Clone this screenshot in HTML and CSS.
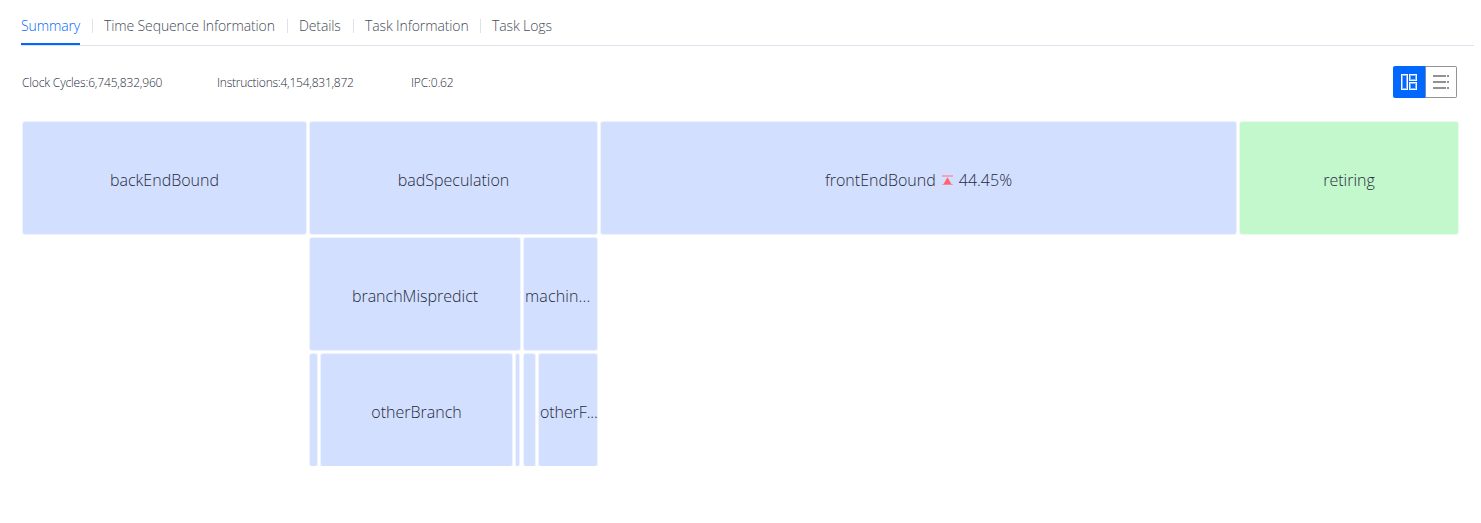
FILE: index.html
```html
<!DOCTYPE html>
<html lang="en">
<head>
<meta charset="utf-8">
<title>Summary</title>
<link rel="stylesheet" href="styles.css">
</head>
<body>
<nav class="tabs">
  <a class="tab summary active">Summary</a>
  <a class="tab sequence">Time Sequence Information</a>
  <a class="tab details">Details</a>
  <a class="tab info">Task Information</a>
  <a class="tab logs">Task Logs</a>
</nav>
<header class="stats">
  <span class="stat cycles">Clock Cycles:6,745,832,960</span>
  <span class="stat instructions">Instructions:4,154,831,872</span>
  <span class="stat ipc">IPC:0.62</span>
  <div class="switch">
    <button class="mode selected" aria-label="Chart view">
      <svg width="16" height="16" viewBox="0 0 16 16"><path d="M0 0h7v16H0zM8 0h8v7H8zM8 8h8v8H8z" fill="#fff"/><path d="M1 1h5v14H1zM9 1h6v5H9zM9 9h6v6H9z" fill="#80b3ff"/><path d="M2 2h3v12H2zM10 2h4v3h-4zM10 10h4v4h-4z" fill="#0067ff"/></svg>
    </button>
    <button class="mode" aria-label="List view">
      <svg width="16" height="14" viewBox="0 0 16 14" fill="#939393"><path d="M0 0h13v2H0zM14 0h2v2h-2zM0 6h13v2H0zM14 6h2v2h-2zM0 12h13v2H0zM14 12h2v2h-2z"/></svg>
    </button>
  </div>
</header>
<main class="chart">
  <div class="cell back"><span>backEndBound</span></div>
  <section class="group bad">
    <div class="cell"><span>badSpeculation</span></div>
    <div class="children">
      <section class="group branch">
        <div class="cell"><span>branchMispredict</span></div>
        <div class="children">
          <div class="cell sliver-a"></div>
          <div class="cell other-branch"><span>otherBranch</span></div>
          <div class="cell sliver-b"></div>
        </div>
      </section>
      <section class="group machine">
        <div class="cell clipped"><span>machin...</span></div>
        <div class="children">
          <div class="cell sliver-c"></div>
          <div class="cell clipped other-flush"><span>otherF...</span></div>
        </div>
      </section>
    </div>
  </section>
  <div class="cell front">
    <span>frontEndBound</span>
    <svg class="alert" width="11" height="10" viewBox="0 0 11 10"><path d="M0 0h11v2H0zM0 9h11v1H0z" fill="#f0a5bb"/><path d="M5.5 2.3L9.7 9.5H1.3z" fill="#ff646e"/></svg>
    <span class="percent">44.45%</span>
  </div>
  <div class="cell retiring"><span>retiring</span></div>
</main>
</body>
</html>
```
FILE: styles.css
```css
* { box-sizing: border-box; }
body {
  margin: 0;
  background: #fff;
  color: #252b3a;
  font-family: "Open Sans", "Noto Sans", sans-serif;
  font-weight: 300;
}
.tabs {
  display: flex;
  gap: 24px;
  height: 46px;
  margin: 0 7px 0 21px;
  border-bottom: 1px solid #dfe1eb;
}
.tab {
  position: relative;
  height: 45px;
  padding-top: 16px;
  font-size: 14px;
  line-height: 20px;
  letter-spacing: -0.12px;
  color: #464c59;
  white-space: nowrap;
}
.tab + .tab::before {
  content: "";
  position: absolute;
  left: -12px;
  top: 19px;
  width: 1px;
  height: 14px;
  background: #dfe1eb;
}
.tab.active { color: #0067ff; border-bottom: 2px solid #0067ff; }
.summary { width: 59px; }
.sequence { width: 171px; }
.details { width: 42px; }
.info { width: 103px; }
.logs { width: 60px; }
.stats {
  display: flex;
  align-items: center;
  height: 76px;
  padding: 0 24px 4px 22px;
  font-size: 12px;
}
.stat { white-space: nowrap; letter-spacing: -0.16px; }
.instructions { letter-spacing: -0.23px; }
.cycles { width: 195px; }
.instructions { width: 194px; }
.switch { display: flex; margin-left: auto; }
.mode {
  display: flex;
  align-items: center;
  justify-content: center;
  width: 31px;
  height: 32px;
  padding: 0;
  background: #fff;
  border: 1px solid #939393;
  border-left: 0;
  border-radius: 0 2px 2px 0;
}
.mode.selected {
  width: 33px;
  background: #0067ff;
  border: 0;
  border-right: 1px solid #6d8fc0;
  border-radius: 2px 0 0 2px;
}
.chart {
  display: flex;
  align-items: flex-start;
  gap: 4px;
  margin-left: 23px;
}
.group { display: flex; flex-direction: column; gap: 4px; }
.children { display: flex; gap: 4px; }
.cell {
  display: flex;
  align-items: center;
  justify-content: center;
  height: 112px;
  padding-top: 4px;
  background: #d3dfff;
  border-radius: 2px;
  box-shadow: 0 0 0 1px #d3dfff66;
  font-size: 16px;
  white-space: nowrap;
}
.back { width: 283px; }
.bad { width: 287px; }
.branch { width: 210px; }
.machine { width: 73px; }
.clipped { justify-content: flex-start; padding-left: 1px; }
.machine > .clipped { letter-spacing: 0.15px; }
.sliver-a { width: 7px; }
.other-branch { width: 191px; }
.sliver-b { width: 3px; }
.sliver-c { width: 11px; }
.other-flush { width: 58px; letter-spacing: -0.1px; }
.front { width: 635px; }
.alert { margin: 0 6px; }
.retiring { width: 218px; background: #c3f7cc; box-shadow: 0 0 0 1px #c3f7cc66; }
```
